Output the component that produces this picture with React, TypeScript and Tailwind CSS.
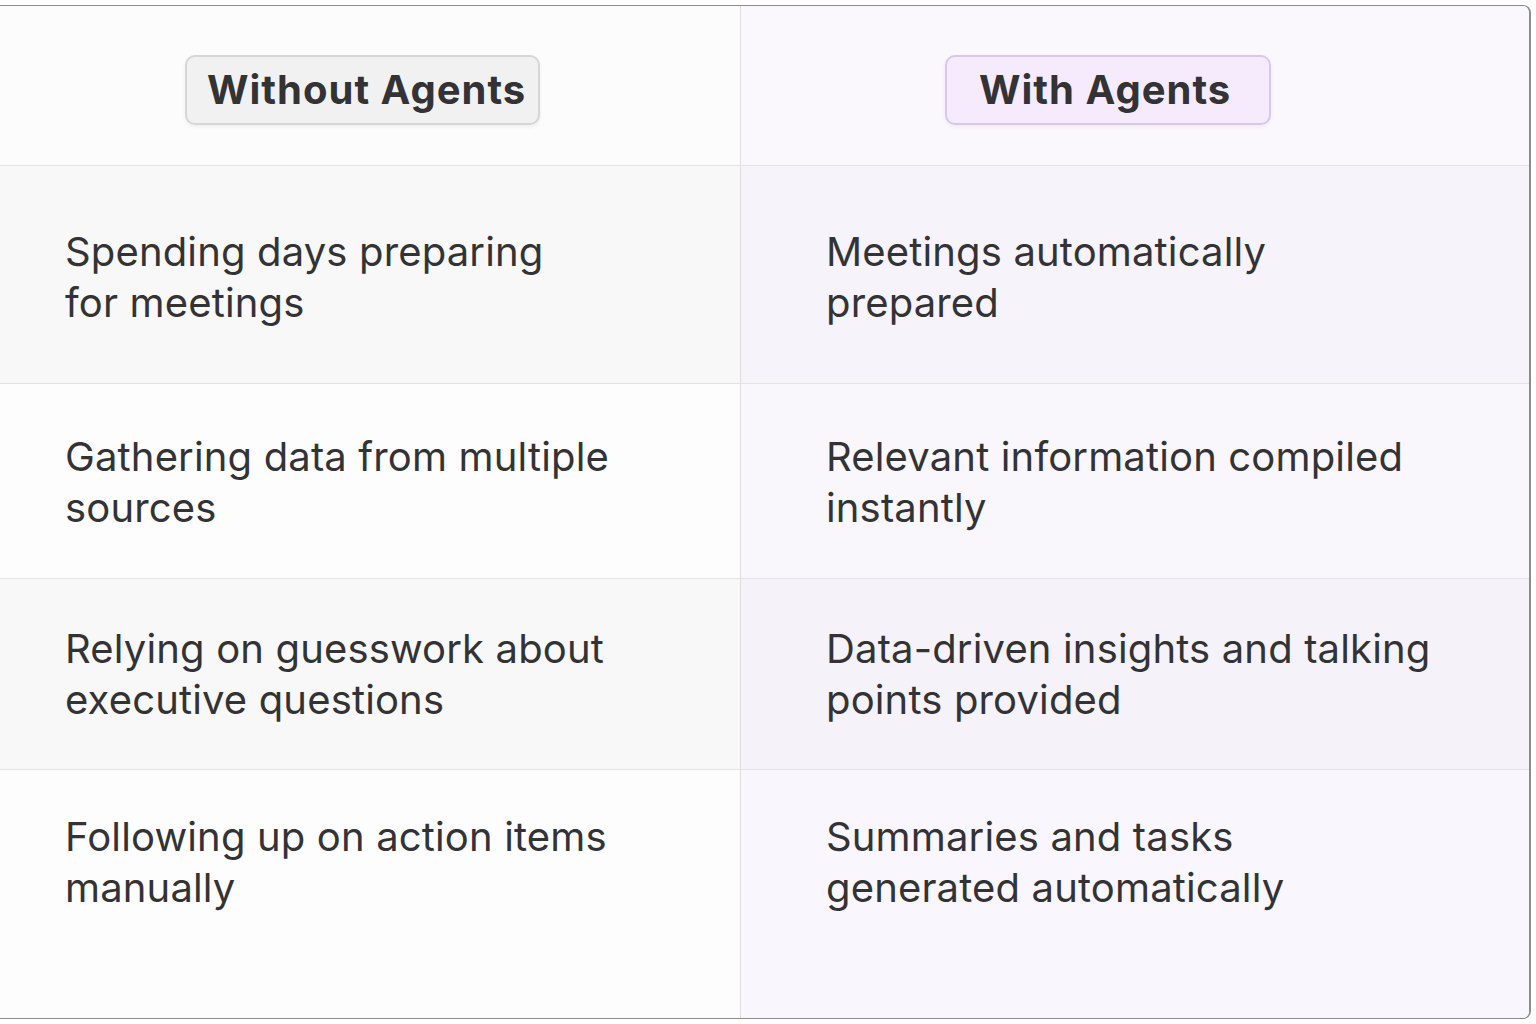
import React from 'react';

interface Row {
  without: string[];
  withAgents: string[];
  height: string;
  pad: string;
  leftBg: string;
  rightBg: string;
}

const rows: Row[] = [
  {
    without: ['Spending days preparing', 'for meetings'],
    withAgents: ['Meetings automatically', 'prepared'],
    height: 'h-[218px]',
    pad: 'pt-[60px]',
    leftBg: 'bg-[#f8f8f8]',
    rightBg: 'bg-[#f6f3fb]',
  },
  {
    without: ['Gathering data from multiple', 'sources'],
    withAgents: ['Relevant information compiled', 'instantly'],
    height: 'h-[195px]',
    pad: 'pt-[47px]',
    leftBg: 'bg-[#fdfdfd]',
    rightBg: 'bg-[#f9f7fc]',
  },
  {
    without: ['Relying on guesswork about', 'executive questions'],
    withAgents: ['Data-driven insights and talking', 'points provided'],
    height: 'h-[191px]',
    pad: 'pt-[44px]',
    leftBg: 'bg-[#f8f8f8]',
    rightBg: 'bg-[#f5f2fa]',
  },
  {
    without: ['Following up on action items', 'manually'],
    withAgents: ['Summaries and tasks', 'generated automatically'],
    height: 'h-[248px]',
    pad: 'pt-[41px]',
    leftBg: 'bg-[#fdfdfd]',
    rightBg: 'bg-[#f9f7fd]',
  },
];

const Lines: React.FC<{ lines: string[] }> = ({ lines }) => (
  <p className="text-[40px] leading-[51px] text-[#333336] tracking-[0.15px]">
    {lines.map((l, i) => (
      <span key={i} className="block whitespace-nowrap">{l}</span>
    ))}
  </p>
);

export default function App() {
  return (
    <div
      className="min-h-screen bg-white pt-[5px]"
      style={{ fontFamily: 'Inter, "Noto Sans", "Liberation Sans", sans-serif' }}
    >
      <div className="w-[1531px] border-t border-b border-r-2 border-[#8c8c8c] rounded-r-[8px] overflow-hidden">
        {/* header */}
        <div className="grid grid-cols-[741px_1fr] h-[160px] border-b border-[#e3e3e3]">
          <div className="bg-[#fcfcfc] border-r border-[#dedede] pl-[185px] pt-[49px]">
            <div className="inline-flex h-[70px] items-center rounded-[10px] border-2 border-[#d6d6d6] bg-[#f1f1f1] pl-[20px] pr-[12px] shadow-[0_2px_4px_rgba(0,0,0,0.06)]">
              <span className="text-[40px] font-bold leading-none tracking-[1px] text-[#333336]">Without Agents</span>
            </div>
          </div>
          <div className="bg-[#faf8fd] pl-[204px] pt-[49px]">
            <div className="inline-flex h-[70px] items-center rounded-[10px] border-2 border-[#d9c6e9] bg-[#f6ebfc] pl-[32px] pr-[38px] shadow-[0_2px_4px_rgba(0,0,0,0.05)]">
              <span className="text-[40px] font-bold leading-none tracking-[1px] text-[#333336]">With Agents</span>
            </div>
          </div>
        </div>

        {rows.map((r, i) => (
          <div
            key={i}
            className={`grid grid-cols-[741px_1fr] ${r.height} ${i < rows.length - 1 ? 'border-b border-[#e3e3e3]' : ''}`}
          >
            <div className={`${r.leftBg} ${r.pad} border-r border-[#dedede] pl-[65px]`}>
              <Lines lines={r.without} />
            </div>
            <div className={`${r.rightBg} ${r.pad} pl-[85px]`}>
              <Lines lines={r.withAgents} />
            </div>
          </div>
        ))}
      </div>
    </div>
  );
}
